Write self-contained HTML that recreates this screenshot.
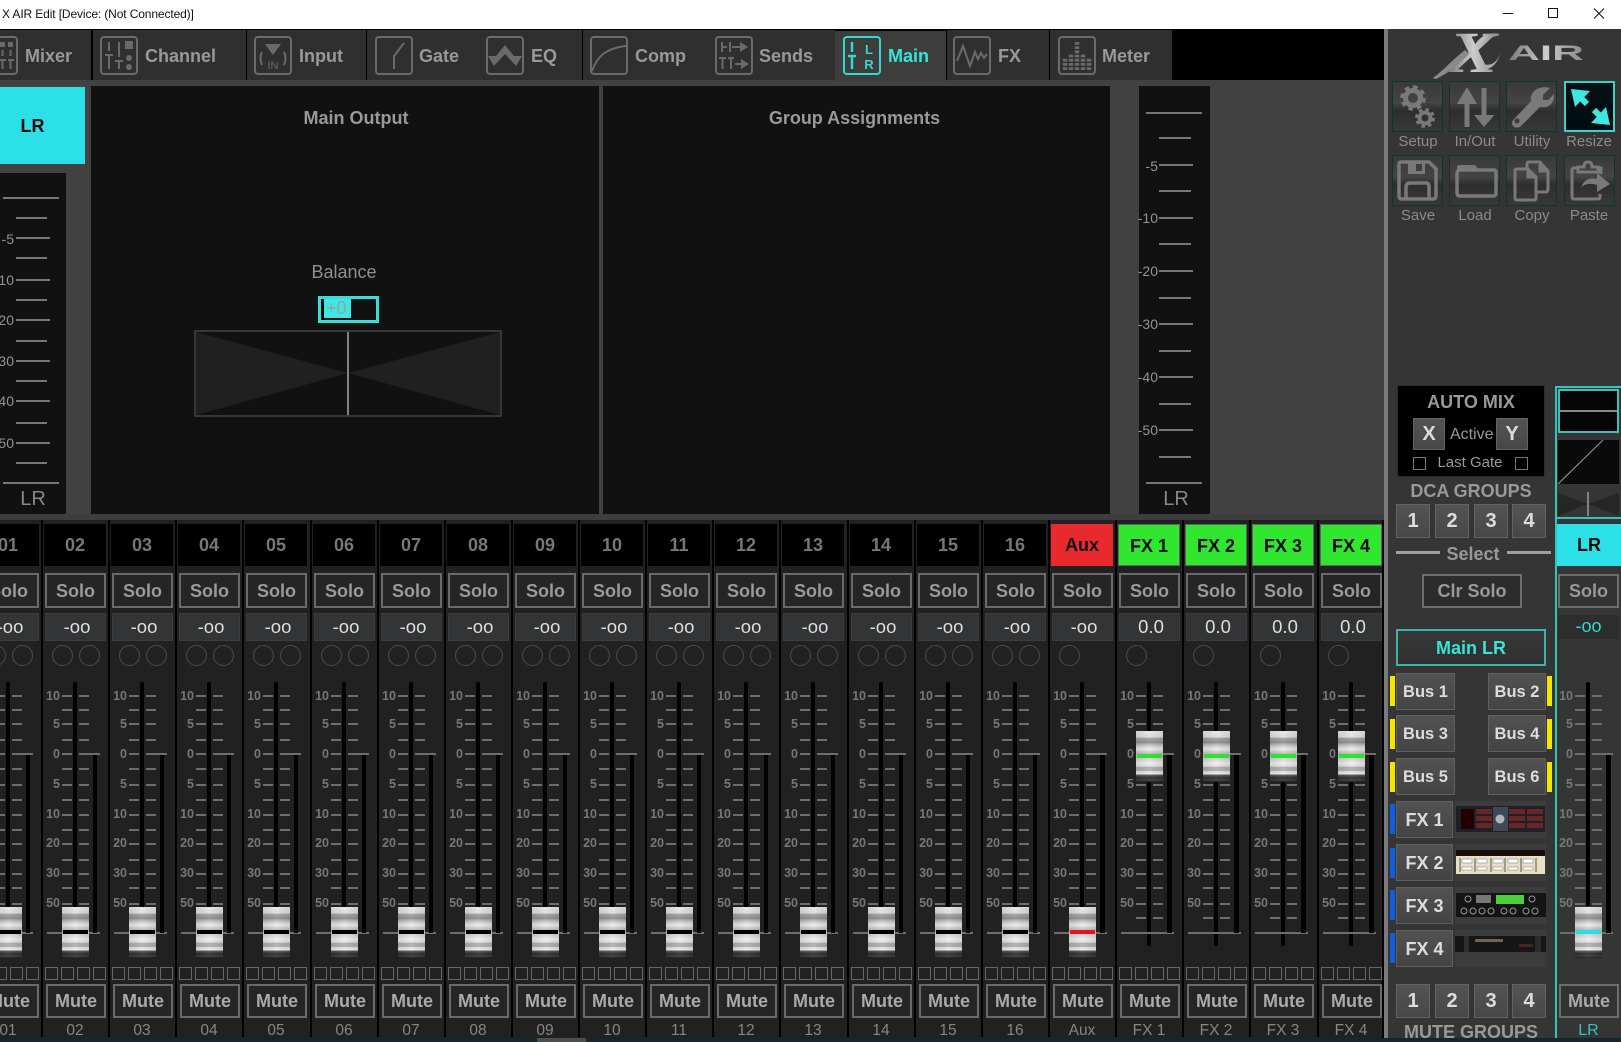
<!DOCTYPE html>
<html><head><meta charset="utf-8"><title>X AIR Edit</title>
<style>
*{box-sizing:border-box;margin:0;padding:0}
html,body{width:1621px;height:1042px;overflow:hidden;background:#414141;font-family:"Liberation Sans",sans-serif}
#root{position:relative;width:1621px;height:1042px;overflow:hidden;background:#414141}
.a,#root i,#root b,#root span,#root p,#root svg{position:absolute;display:block}
.tx{white-space:nowrap;text-align:center}
/* tabs */
#tabs{left:0;top:29px;width:1384px;height:51px;background:#000}
.tab{position:absolute;top:1px;height:50px;background:#2f2f2f}
.tl{position:absolute;top:16px;font:bold 18px/22px "Liberation Sans",sans-serif;color:#999;white-space:nowrap}
.ic{top:7px;width:38px;height:39px;fill:none;stroke:#6a6a6a;stroke-width:2}
.ic .fl{fill:#6a6a6a;stroke:none}
.pn{background:#111}
.ttl{font:bold 18px/22px "Liberation Sans",sans-serif;color:#999;text-align:center;white-space:nowrap}
.ln{background:#777;height:2px}
.ml{font:14px/16px "Liberation Sans",sans-serif;color:#939393;text-align:right;width:40px;white-space:nowrap}
/* channels */
#strip{left:0;top:520px;width:1384px;height:518px;background:#212121}
.c{position:absolute;top:0;width:62px;height:1042px}
.c::before{content:"";position:absolute;left:-3px;top:520px;width:2px;height:517px;background:#000}
.c.lr::before{display:none}
.c .h{left:0;top:524px;width:62px;height:42px;background:#000;color:#777;font:bold 18px/42px "Liberation Sans",sans-serif;text-align:center}
.c .h.g{background:#31e62e;color:#0a0a0a}
.c .h.r{background:#e8292e;color:#111}
.c .so{left:1px;top:573px;width:61px;height:35px;border:2px solid #6a6a6a;background:#252525;color:#9a9a9a;font:bold 18px/33px "Liberation Sans",sans-serif;text-align:center}
.c .v{left:1px;top:613px;width:61px;height:28px;background:#323436;border:1px solid #3a3c3e;color:#dedede;font:18.5px/26px "Liberation Sans",sans-serif;text-align:center;padding-left:3px}
.c .o{left:8px;top:645px;width:21px;height:21px;border:1px solid #4c4c4c;border-radius:50%}
.c .o2{left:35px}
.c .tr{left:29px;top:682px;width:4px;height:264px;background:#000;border-radius:2px 2px 0 0}
.c .tk{left:18px;top:695px;width:10px;height:2px;background:#6e6e6e;box-shadow:17px 0 #6e6e6e,0 14px #6e6e6e,17px 14px #6e6e6e,0 28px #6e6e6e,17px 28px #6e6e6e,0 44px #6e6e6e,17px 44px #6e6e6e,0 73px #6e6e6e,17px 73px #6e6e6e,0 89px #6e6e6e,17px 89px #6e6e6e,0 104px #6e6e6e,17px 104px #6e6e6e,0 119px #6e6e6e,17px 119px #6e6e6e,0 134px #6e6e6e,17px 134px #6e6e6e,0 148px #6e6e6e,17px 148px #6e6e6e,0 164px #6e6e6e,17px 164px #6e6e6e,0 178px #6e6e6e,17px 178px #6e6e6e,0 192px #6e6e6e,17px 192px #6e6e6e,0 208px #6e6e6e,17px 208px #6e6e6e,0 222px #6e6e6e,17px 222px #6e6e6e}
.c .l0{left:18px;top:753px;width:38px;height:2px;background:linear-gradient(90deg,#6e6e6e 0,#6e6e6e 10px,transparent 10px,transparent 17px,#6e6e6e 17px)}
.c .l1{left:3px;top:932px;width:53px;height:2px;background:#6e6e6e}
.c .mt{left:49px;top:755px;width:4px;height:178px;background:#000}
.c .mt.w{width:5px}
.c .n{left:0;top:0;width:16px;height:0}
.c .n a{position:absolute;right:0;font:bold 12.5px/14px "Liberation Sans",sans-serif;color:#777}
.c .n a:nth-child(1){top:689px}.c .n a:nth-child(2){top:717px}.c .n a:nth-child(3){top:747px}.c .n a:nth-child(4){top:777px}.c .n a:nth-child(5){top:807px}.c .n a:nth-child(6){top:836px}.c .n a:nth-child(7){top:866px}.c .n a:nth-child(8){top:896px}
.f{left:18px;top:907px;width:27px;height:51px;background:linear-gradient(90deg,rgba(0,0,0,.1),rgba(255,255,255,.05) 50%,rgba(0,0,0,.1)),linear-gradient(#e8e8e8 0,#dedede 6px,#8f8f8f 8px,#a6a6a6 9px,#8a8a8a 11px,#b0b0b0 13px,#cfcfcf 15px,#eee 18px,#bdbdbd 23px,#d6d6d6 28px,#f2f2f2 33px,#cfcfcf 36px,#909090 37px,#d0d0d0 38px,#8a8a8a 39px,#ddd 40px,#eee 43px,#5c5c5c 44px,#2a2a2a 47px,#444 49px,#1a1a1a 51px)}
.f::after{content:"";position:absolute;left:1px;right:1px;top:23px;height:4px;background:var(--k,#000)}
.c .q{left:1px;top:967px;width:61px;height:13px}
.c .q i{top:0;width:13px;height:13px;border:1.5px solid #666}
.c .q i:nth-child(1){left:0}.c .q i:nth-child(2){left:16px}.c .q i:nth-child(3){left:32px}.c .q i:nth-child(4){left:48px}
.c .mu{left:2px;top:984px;width:60px;height:34px;border:2px solid #6a6a6a;background:#252525;color:#aaa;font:bold 18px/30px "Liberation Sans",sans-serif;text-align:center}
.c .nm{left:0;top:1022px;width:62px;font:15.5px/18px "Liberation Sans",sans-serif;color:#868686;text-align:center}
/* right panel */
#rp{left:1388px;top:29px;width:233px;height:1009px;background:#353535}
.tb{width:51px;height:51px;background:linear-gradient(#393939 0,#444 42%,#2e2e2e 58%,#383838 100%);border:1px solid #0f3530}
.tb svg{left:0;top:0;width:49px;height:49px}
.tlb{width:60px;text-align:center;font:15px/18px "Liberation Sans",sans-serif;color:#8b8b8b;white-space:nowrap}
.g{width:34px;height:34px;background:linear-gradient(#545454,#474747);border:1px solid #626262;color:#ddd;font:bold 20px/32px "Liberation Sans",sans-serif;text-align:center}
.bb{height:37px;background:linear-gradient(#525252,#444);border:1px solid #606060;color:#ddd;font:bold 16.5px/37px "Liberation Sans",sans-serif;text-align:center}
.fx{font-size:18px;line-height:36px}
.flg{width:5px;height:30px}
.rk{left:1455px;width:91px;height:37px;background:#3c3c3c}
</style></head><body><div id="root">

<!-- title bar -->
<div class="a" style="left:0;top:0;width:1621px;height:29px;background:#fff"></div>
<div class="a tx" style="left:2px;top:6px;font:12px/16px 'Liberation Sans',sans-serif;color:#111;letter-spacing:-.12px;text-align:left">X AIR Edit [Device: (Not Connected)]</div>
<svg style="left:1500px;top:6px" width="110" height="16" fill="none" stroke="#111" stroke-width="1"><path d="M3 7.500H13"/><rect x="48.500" y="2.500" width="9" height="9"/><path d="M94 2.500L104 12.500M104 2.500L94 12.500"/></svg>

<!-- tabs -->
<div id="tabs" class="a">
<div class="tab" style="left:0;width:91px"></div>
<div class="tab" style="left:93px;width:153px"></div>
<div class="tab" style="left:247px;width:119px"></div>
<div class="tab" style="left:367px;width:215px"></div>
<div class="tab" style="left:583px;width:252px"></div>
<div class="tab" style="left:835px;width:111px;background:#3d3d3d;top:2px"></div>
<div class="tab" style="left:947px;width:102px"></div>
<div class="tab" style="left:1050px;width:122px"></div>

<svg class="ic" style="left:-20px" viewBox="0 0 38 39"><rect x="1" y="1" width="36" height="37" rx="3"/><path class="fl" d="M20 6h5v5h-5zM28 6h5v5h-5z"/><path d="M22.500 14v6M30.500 14v6M19 24h7M22.500 24v9M28 24h6M30.500 24v9"/></svg>
<div class="tl" style="left:25px">Mixer</div>
<svg class="ic" style="left:100px" viewBox="0 0 38 39"><rect x="1" y="1" width="36" height="37" rx="3"/><path d="M9 6v9M5 19h8M9 19v14M19 6v15M15 25h8M19 25v8"/><path class="fl" d="M25 5h8v8h-8z"/><circle class="fl" cx="29" cy="22" r="3"/><circle class="fl" cx="29" cy="31" r="3"/></svg>
<div class="tl" style="left:145px">Channel</div>
<svg class="ic" style="left:254px" viewBox="0 0 38 39"><rect x="1" y="1" width="36" height="37" rx="3"/><path class="fl" d="M11 8h16l-8 11z"/><path d="M8 16q-3 6 0 13M30 16q3 6 0 13"/><text x="19" y="33" text-anchor="middle" font-family="Liberation Sans" font-size="11" fill="#6a6a6a" stroke="none">IN</text></svg>
<div class="tl" style="left:299px">Input</div>
<svg class="ic" style="left:375px" viewBox="0 0 38 39"><rect x="1" y="1" width="36" height="37" rx="3"/><path d="M19 33V20L29 7"/></svg>
<div class="tl" style="left:419px">Gate</div>
<svg class="ic" style="left:486px" viewBox="0 0 38 39"><rect x="1" y="1" width="36" height="37" rx="3"/><path class="fl" d="M2 20h8L19 9l9 11h8l-6 10-11-12-11 12z"/></svg>
<div class="tl" style="left:531px">EQ</div>
<svg class="ic" style="left:590px" viewBox="0 0 38 39"><rect x="1" y="1" width="36" height="37" rx="3"/><path d="M2 35C7 20 17 12 36 10"/></svg>
<div class="tl" style="left:635px">Comp</div>
<svg class="ic" style="left:715px" viewBox="0 0 38 39"><rect x="1" y="1" width="36" height="37" rx="3"/><path d="M7 6v10M7 11h5M15 6v10M17 11h9M4 22h7M7.500 22v11M13 22h6M16 22v11M20 28h7"/><path class="fl" d="M25 6l8 5-8 5zM26 23l8 5-8 5z"/></svg>
<div class="tl" style="left:759px">Sends</div>
<svg class="ic" style="left:843px;stroke:#35d8d0" viewBox="0 0 38 39"><rect x="1" y="1" width="36" height="37" rx="3"/><path d="M9 6v10M5 20h8M9 20v13" stroke-width="2.500"/><text x="26" y="18" text-anchor="middle" font-family="Liberation Sans" font-weight="bold" font-size="13" fill="#35d8d0" stroke="none">L</text><text x="26" y="33" text-anchor="middle" font-family="Liberation Sans" font-weight="bold" font-size="13" fill="#35d8d0" stroke="none">R</text></svg>
<div class="tl" style="left:888px;color:#38e4d8">Main</div>
<svg class="ic" style="left:953px" viewBox="0 0 38 39"><rect x="1" y="1" width="36" height="37" rx="3"/><path d="M4 25L10 10l7 20 5-14 3 7 3-6 3 5 3-4"/></svg>
<div class="tl" style="left:998px">FX</div>
<svg class="ic" style="left:1058px" viewBox="0 0 38 39"><rect x="1" y="1" width="36" height="37" rx="3"/><path d="M7 34V22M13 34V18M19 34V5M25 34V18M31 34V22" stroke-width="4.500" stroke-dasharray="2.800 1.400"/></svg>
<div class="tl" style="left:1102px">Meter</div>
</div>

<!-- main panels -->
<div class="a" style="left:0;top:87px;width:85px;height:77px;background:#2ce0e8"></div>
<div class="a tx" style="left:0;top:115px;width:65px;font:bold 18px/22px 'Liberation Sans',sans-serif;color:#0a0a0a">LR</div>
<div class="a pn" style="left:0;top:173px;width:66px;height:341px"></div>
<div class="a pn" style="left:91px;top:86px;width:508px;height:428px"></div>
<div class="a pn" style="left:603px;top:86px;width:507px;height:428px"></div>
<div class="a pn" style="left:1139px;top:86px;width:71px;height:428px"></div>
<div class="a ttl" style="left:91px;top:107px;width:530px">Main Output</div>
<div class="a ttl" style="left:603px;top:107px;width:503px">Group Assignments</div>

<!-- left meter -->
<div class="a ln" style="left:3px;top:197px;width:56px"></div><div class="a ln" style="left:3px;top:482px;width:56px"></div>
<div class="a ln" style="left:16px;top:217px;width:31px"></div><div class="a ln" style="left:16px;top:257px;width:31px"></div><div class="a ln" style="left:16px;top:299px;width:31px"></div><div class="a ln" style="left:16px;top:340px;width:31px"></div><div class="a ln" style="left:16px;top:380px;width:31px"></div><div class="a ln" style="left:16px;top:422px;width:31px"></div><div class="a ln" style="left:16px;top:462px;width:31px"></div>
<div class="a ln" style="left:16px;top:237px;width:34px"></div><div class="a ln" style="left:16px;top:279px;width:34px"></div><div class="a ln" style="left:16px;top:319px;width:34px"></div><div class="a ln" style="left:16px;top:360px;width:34px"></div><div class="a ln" style="left:16px;top:400px;width:34px"></div><div class="a ln" style="left:16px;top:442px;width:34px"></div>
<div class="a ml" style="left:-26px;top:231px">-5</div><div class="a ml" style="left:-26px;top:272px">-10</div><div class="a ml" style="left:-26px;top:312px">-20</div><div class="a ml" style="left:-26px;top:353px">-30</div><div class="a ml" style="left:-26px;top:393px">-40</div><div class="a ml" style="left:-26px;top:435px">-50</div>
<div class="a tx" style="left:8px;top:488px;width:50px;font:20px/22px 'Liberation Sans',sans-serif;color:#888">LR</div>

<!-- right meter -->
<div class="a ln" style="left:1146px;top:112px;width:56px"></div><div class="a ln" style="left:1146px;top:482px;width:56px"></div>
<div class="a ln" style="left:1159px;top:137px;width:32px"></div><div class="a ln" style="left:1159px;top:190px;width:32px"></div><div class="a ln" style="left:1159px;top:243px;width:32px"></div><div class="a ln" style="left:1159px;top:297px;width:32px"></div><div class="a ln" style="left:1159px;top:350px;width:32px"></div><div class="a ln" style="left:1159px;top:403px;width:32px"></div><div class="a ln" style="left:1159px;top:456px;width:32px"></div>
<div class="a ln" style="left:1159px;top:164px;width:34px"></div><div class="a ln" style="left:1159px;top:217px;width:34px"></div><div class="a ln" style="left:1159px;top:270px;width:34px"></div><div class="a ln" style="left:1159px;top:323px;width:34px"></div><div class="a ln" style="left:1159px;top:376px;width:34px"></div><div class="a ln" style="left:1159px;top:429px;width:34px"></div>
<div class="a ml" style="left:1118px;top:158px">-5</div><div class="a ml" style="left:1118px;top:210px">-10</div><div class="a ml" style="left:1118px;top:263px">-20</div><div class="a ml" style="left:1118px;top:316px">-30</div><div class="a ml" style="left:1118px;top:369px">-40</div><div class="a ml" style="left:1118px;top:422px">-50</div>
<div class="a tx" style="left:1151px;top:488px;width:50px;font:20px/22px 'Liberation Sans',sans-serif;color:#888">LR</div>

<!-- balance -->
<div class="a tx" style="left:294px;top:261px;width:100px;font:18px/22px 'Liberation Sans',sans-serif;color:#909090">Balance</div>
<div class="a" style="left:318px;top:296px;width:61px;height:27px;background:#111;border:3px solid #3cdcd6"></div>
<div class="a" style="left:321px;top:299px;width:3px;height:21px;background:#000"></div>
<div class="a" style="left:324px;top:299px;width:27px;height:19px;background:#40e6e2"></div>
<div class="a tx" style="left:326px;top:298px;font:18px/20px 'Liberation Sans',sans-serif;color:#8aa8a8">+0</div>
<svg style="left:194px;top:330px" width="308" height="87"><path d="M2 2L154 43L2 85zM306 2L154 43L306 85z" fill="#202020"/><rect x="1" y="1" width="306" height="85" fill="none" stroke="#424242" stroke-width="1.500"/><path d="M154 2V85" stroke="#a8a8a8" stroke-width="1.500"/></svg>

<!-- channel strip -->
<div id="strip" class="a"></div>
<div class="a" style="left:0;top:514px;width:1384px;height:6px;background:#3d3d3d"></div>

<div class="c" style="left:-23px"><b class="h">01</b><b class="so">Solo</b><span class="v">-oo</span><i class="o"></i><i class="o o2"></i><i class="tr"></i><i class="tk"></i><i class="l0"></i><i class="l1"></i><i class="mt"></i><p class="n"><a>10</a><a>5</a><a>0</a><a>5</a><a>10</a><a>20</a><a>30</a><a>50</a></p><i class="f"></i><p class="q"><i></i><i></i><i></i><i></i></p><b class="mu">Mute</b><span class="nm">01</span></div>
<div class="c" style="left:44px"><b class="h">02</b><b class="so">Solo</b><span class="v">-oo</span><i class="o"></i><i class="o o2"></i><i class="tr"></i><i class="tk"></i><i class="l0"></i><i class="l1"></i><i class="mt"></i><p class="n"><a>10</a><a>5</a><a>0</a><a>5</a><a>10</a><a>20</a><a>30</a><a>50</a></p><i class="f"></i><p class="q"><i></i><i></i><i></i><i></i></p><b class="mu">Mute</b><span class="nm">02</span></div>
<div class="c" style="left:111px"><b class="h">03</b><b class="so">Solo</b><span class="v">-oo</span><i class="o"></i><i class="o o2"></i><i class="tr"></i><i class="tk"></i><i class="l0"></i><i class="l1"></i><i class="mt"></i><p class="n"><a>10</a><a>5</a><a>0</a><a>5</a><a>10</a><a>20</a><a>30</a><a>50</a></p><i class="f"></i><p class="q"><i></i><i></i><i></i><i></i></p><b class="mu">Mute</b><span class="nm">03</span></div>
<div class="c" style="left:178px"><b class="h">04</b><b class="so">Solo</b><span class="v">-oo</span><i class="o"></i><i class="o o2"></i><i class="tr"></i><i class="tk"></i><i class="l0"></i><i class="l1"></i><i class="mt"></i><p class="n"><a>10</a><a>5</a><a>0</a><a>5</a><a>10</a><a>20</a><a>30</a><a>50</a></p><i class="f"></i><p class="q"><i></i><i></i><i></i><i></i></p><b class="mu">Mute</b><span class="nm">04</span></div>
<div class="c" style="left:245px"><b class="h">05</b><b class="so">Solo</b><span class="v">-oo</span><i class="o"></i><i class="o o2"></i><i class="tr"></i><i class="tk"></i><i class="l0"></i><i class="l1"></i><i class="mt"></i><p class="n"><a>10</a><a>5</a><a>0</a><a>5</a><a>10</a><a>20</a><a>30</a><a>50</a></p><i class="f"></i><p class="q"><i></i><i></i><i></i><i></i></p><b class="mu">Mute</b><span class="nm">05</span></div>
<div class="c" style="left:313px"><b class="h">06</b><b class="so">Solo</b><span class="v">-oo</span><i class="o"></i><i class="o o2"></i><i class="tr"></i><i class="tk"></i><i class="l0"></i><i class="l1"></i><i class="mt"></i><p class="n"><a>10</a><a>5</a><a>0</a><a>5</a><a>10</a><a>20</a><a>30</a><a>50</a></p><i class="f"></i><p class="q"><i></i><i></i><i></i><i></i></p><b class="mu">Mute</b><span class="nm">06</span></div>
<div class="c" style="left:380px"><b class="h">07</b><b class="so">Solo</b><span class="v">-oo</span><i class="o"></i><i class="o o2"></i><i class="tr"></i><i class="tk"></i><i class="l0"></i><i class="l1"></i><i class="mt"></i><p class="n"><a>10</a><a>5</a><a>0</a><a>5</a><a>10</a><a>20</a><a>30</a><a>50</a></p><i class="f"></i><p class="q"><i></i><i></i><i></i><i></i></p><b class="mu">Mute</b><span class="nm">07</span></div>
<div class="c" style="left:447px"><b class="h">08</b><b class="so">Solo</b><span class="v">-oo</span><i class="o"></i><i class="o o2"></i><i class="tr"></i><i class="tk"></i><i class="l0"></i><i class="l1"></i><i class="mt"></i><p class="n"><a>10</a><a>5</a><a>0</a><a>5</a><a>10</a><a>20</a><a>30</a><a>50</a></p><i class="f"></i><p class="q"><i></i><i></i><i></i><i></i></p><b class="mu">Mute</b><span class="nm">08</span></div>
<div class="c" style="left:514px"><b class="h">09</b><b class="so">Solo</b><span class="v">-oo</span><i class="o"></i><i class="o o2"></i><i class="tr"></i><i class="tk"></i><i class="l0"></i><i class="l1"></i><i class="mt"></i><p class="n"><a>10</a><a>5</a><a>0</a><a>5</a><a>10</a><a>20</a><a>30</a><a>50</a></p><i class="f"></i><p class="q"><i></i><i></i><i></i><i></i></p><b class="mu">Mute</b><span class="nm">09</span></div>
<div class="c" style="left:581px"><b class="h">10</b><b class="so">Solo</b><span class="v">-oo</span><i class="o"></i><i class="o o2"></i><i class="tr"></i><i class="tk"></i><i class="l0"></i><i class="l1"></i><i class="mt"></i><p class="n"><a>10</a><a>5</a><a>0</a><a>5</a><a>10</a><a>20</a><a>30</a><a>50</a></p><i class="f"></i><p class="q"><i></i><i></i><i></i><i></i></p><b class="mu">Mute</b><span class="nm">10</span></div>
<div class="c" style="left:648px"><b class="h">11</b><b class="so">Solo</b><span class="v">-oo</span><i class="o"></i><i class="o o2"></i><i class="tr"></i><i class="tk"></i><i class="l0"></i><i class="l1"></i><i class="mt"></i><p class="n"><a>10</a><a>5</a><a>0</a><a>5</a><a>10</a><a>20</a><a>30</a><a>50</a></p><i class="f"></i><p class="q"><i></i><i></i><i></i><i></i></p><b class="mu">Mute</b><span class="nm">11</span></div>
<div class="c" style="left:715px"><b class="h">12</b><b class="so">Solo</b><span class="v">-oo</span><i class="o"></i><i class="o o2"></i><i class="tr"></i><i class="tk"></i><i class="l0"></i><i class="l1"></i><i class="mt"></i><p class="n"><a>10</a><a>5</a><a>0</a><a>5</a><a>10</a><a>20</a><a>30</a><a>50</a></p><i class="f"></i><p class="q"><i></i><i></i><i></i><i></i></p><b class="mu">Mute</b><span class="nm">12</span></div>
<div class="c" style="left:782px"><b class="h">13</b><b class="so">Solo</b><span class="v">-oo</span><i class="o"></i><i class="o o2"></i><i class="tr"></i><i class="tk"></i><i class="l0"></i><i class="l1"></i><i class="mt"></i><p class="n"><a>10</a><a>5</a><a>0</a><a>5</a><a>10</a><a>20</a><a>30</a><a>50</a></p><i class="f"></i><p class="q"><i></i><i></i><i></i><i></i></p><b class="mu">Mute</b><span class="nm">13</span></div>
<div class="c" style="left:850px"><b class="h">14</b><b class="so">Solo</b><span class="v">-oo</span><i class="o"></i><i class="o o2"></i><i class="tr"></i><i class="tk"></i><i class="l0"></i><i class="l1"></i><i class="mt"></i><p class="n"><a>10</a><a>5</a><a>0</a><a>5</a><a>10</a><a>20</a><a>30</a><a>50</a></p><i class="f"></i><p class="q"><i></i><i></i><i></i><i></i></p><b class="mu">Mute</b><span class="nm">14</span></div>
<div class="c" style="left:917px"><b class="h">15</b><b class="so">Solo</b><span class="v">-oo</span><i class="o"></i><i class="o o2"></i><i class="tr"></i><i class="tk"></i><i class="l0"></i><i class="l1"></i><i class="mt"></i><p class="n"><a>10</a><a>5</a><a>0</a><a>5</a><a>10</a><a>20</a><a>30</a><a>50</a></p><i class="f"></i><p class="q"><i></i><i></i><i></i><i></i></p><b class="mu">Mute</b><span class="nm">15</span></div>
<div class="c" style="left:984px"><b class="h">16</b><b class="so">Solo</b><span class="v">-oo</span><i class="o"></i><i class="o o2"></i><i class="tr"></i><i class="tk"></i><i class="l0"></i><i class="l1"></i><i class="mt"></i><p class="n"><a>10</a><a>5</a><a>0</a><a>5</a><a>10</a><a>20</a><a>30</a><a>50</a></p><i class="f"></i><p class="q"><i></i><i></i><i></i><i></i></p><b class="mu">Mute</b><span class="nm">16</span></div>
<div class="c" style="left:1051px"><b class="h r">Aux</b><b class="so">Solo</b><span class="v">-oo</span><i class="o"></i><i class="tr"></i><i class="tk"></i><i class="l0"></i><i class="l1"></i><i class="mt w"></i><p class="n"><a>10</a><a>5</a><a>0</a><a>5</a><a>10</a><a>20</a><a>30</a><a>50</a></p><i class="f" style="--k:#e8101c"></i><p class="q"><i></i><i></i><i></i><i></i></p><b class="mu">Mute</b><span class="nm">Aux</span></div>
<div class="c" style="left:1118px"><b class="h g">FX 1</b><b class="so">Solo</b><span class="v">0.0</span><i class="o"></i><i class="tr"></i><i class="tk"></i><i class="l0"></i><i class="l1"></i><i class="mt w"></i><p class="n"><a>10</a><a>5</a><a>0</a><a>5</a><a>10</a><a>20</a><a>30</a><a>50</a></p><i class="f" style="top:731px;--k:#2fe02f"></i><p class="q"><i></i><i></i><i></i><i></i></p><b class="mu">Mute</b><span class="nm">FX 1</span></div>
<div class="c" style="left:1185px"><b class="h g">FX 2</b><b class="so">Solo</b><span class="v">0.0</span><i class="o"></i><i class="tr"></i><i class="tk"></i><i class="l0"></i><i class="l1"></i><i class="mt w"></i><p class="n"><a>10</a><a>5</a><a>0</a><a>5</a><a>10</a><a>20</a><a>30</a><a>50</a></p><i class="f" style="top:731px;--k:#2fe02f"></i><p class="q"><i></i><i></i><i></i><i></i></p><b class="mu">Mute</b><span class="nm">FX 2</span></div>
<div class="c" style="left:1252px"><b class="h g">FX 3</b><b class="so">Solo</b><span class="v">0.0</span><i class="o"></i><i class="tr"></i><i class="tk"></i><i class="l0"></i><i class="l1"></i><i class="mt w"></i><p class="n"><a>10</a><a>5</a><a>0</a><a>5</a><a>10</a><a>20</a><a>30</a><a>50</a></p><i class="f" style="top:731px;--k:#2fe02f"></i><p class="q"><i></i><i></i><i></i><i></i></p><b class="mu">Mute</b><span class="nm">FX 3</span></div>
<div class="c" style="left:1320px"><b class="h g">FX 4</b><b class="so">Solo</b><span class="v">0.0</span><i class="o"></i><i class="tr"></i><i class="tk"></i><i class="l0"></i><i class="l1"></i><i class="mt w"></i><p class="n"><a>10</a><a>5</a><a>0</a><a>5</a><a>10</a><a>20</a><a>30</a><a>50</a></p><i class="f" style="top:731px;--k:#2fe02f"></i><p class="q"><i></i><i></i><i></i><i></i></p><b class="mu">Mute</b><span class="nm">FX 4</span></div>

<!-- right panel -->
<div class="a" style="left:1382px;top:520px;width:2px;height:518px;background:#000"></div>
<div class="a" style="left:1384px;top:29px;width:4px;height:1009px;background:#7a7a7a"></div>
<div id="rp" class="a"></div>

<svg style="left:1430px;top:30px" width="160" height="52">
<defs><linearGradient id="lg" x1="0" y1="0" x2="1" y2="0"><stop offset="0" stop-color="#777"/><stop offset=".5" stop-color="#ccc"/><stop offset="1" stop-color="#888"/></linearGradient></defs>
<path d="M3 48C14 40 22 30 35 20L41 25C28 36 16 44 6 49Z" fill="#8a8a8a"/>
<path d="M70 4C58 2 50 6 44 16L38 24 43 29 50 18C55 11 61 7 70 4Z" fill="#bdbdbd"/>
<path d="M70 24C66 34 60 36 53 34L49 25 44 30 48 38C56 42 66 38 70 24Z" fill="#aaa"/>
<text transform="translate(19 42) scale(1.25 1)" font-family="Liberation Serif" font-style="italic" font-weight="bold" font-size="58" fill="url(#lg)">X</text>
<text x="78" y="30" font-family="Liberation Sans" font-weight="bold" font-size="21" fill="url(#lg)" textLength="76" lengthAdjust="spacingAndGlyphs">AIR</text>
</svg>

<div class="a tb" style="left:1392px;top:81px"><svg viewBox="0 0 49 49" fill="none" stroke="#77797b"><circle cx="20" cy="16" r="7.500" stroke-width="5"/><circle cx="20" cy="16" r="11" stroke-width="3.500" stroke-dasharray="4.500 4.100"/><circle cx="32" cy="36" r="5.500" stroke-width="4"/><circle cx="32" cy="36" r="8.500" stroke-width="3" stroke-dasharray="3.500 3.200"/></svg></div>
<div class="a tb" style="left:1449px;top:81px"><svg viewBox="0 0 49 49" fill="#77797b"><path d="M17 5L27 22H19.500V45H14.500V22H7z"/><path d="M31.500 6H36.500V33H44.500L34 45 24 33H31.500z"/></svg></div>
<div class="a tb" style="left:1506px;top:81px"><svg viewBox="0 0 49 49"><path d="M43 6l-7 7v5h5l6-6c1 8-5 15-14 13L14 44c-3 3-9 2-9-3 0-2 1-3 3-5L24 19C22 10 32 3 43 6z" fill="#77797b"/><circle cx="10" cy="39" r="2.500" fill="#3a3a3a"/></svg></div>
<div class="a tb" style="left:1564px;top:81px;background:linear-gradient(#051015,#000e10);border:2px solid #3fd0c8"><svg style="left:-1px;top:-1px" viewBox="0 0 49 49"><g fill="#3ee8e0"><path d="M6 7L25 9 10 25z"/><path d="M45 43L26 41 41 25z"/></g><path d="M14 14L22 22M29 28L37 36" stroke="#3ee8e0" stroke-width="6"/></svg></div>
<div class="a tlb" style="left:1388px;top:133px">Setup</div><div class="a tlb" style="left:1445px;top:133px">In/Out</div><div class="a tlb" style="left:1502px;top:133px">Utility</div><div class="a tlb" style="left:1559px;top:133px">Resize</div>

<div class="a tb" style="left:1392px;top:155px"><svg viewBox="0 0 49 49" fill="none" stroke="#77797b" stroke-width="3.500"><path d="M8 6H36L43 13V40Q43 43 40 43H9Q6 43 6 40V8Q6 6 8 6Z"/><path d="M15 6H32V18H15Z" fill="#77797b" stroke="none"/><path d="M13 42V31Q13 27 17 27H33Q36 27 36 31V42"/><path d="M23 8H29V15H23Z" fill="#3f3f3f" stroke="none"/></svg></div>
<div class="a tb" style="left:1449px;top:155px"><svg viewBox="0 0 49 49" fill="none" stroke="#77797b" stroke-width="3.500"><path d="M7 18Q7 14 10 14H44Q46 14 46 17V37Q46 40 43 40H10Q7 40 7 37Z"/><path d="M7 14V11Q7 9 10 9H25L29 14Z" fill="#77797b" stroke="none"/></svg></div>
<div class="a tb" style="left:1506px;top:155px"><svg viewBox="0 0 49 49" fill="none" stroke="#77797b" stroke-width="3"><path d="M20 13V8Q20 6 22 6H33L41 15V33Q41 36 38 36H30"/><path d="M33 6V15H41" fill="#77797b"/><path d="M10 13H21L29 21V42Q29 44 27 44H10Q8 44 8 42V15Q8 13 10 13Z"/><path d="M21 13V21H29" fill="#77797b"/></svg></div>
<div class="a tb" style="left:1564px;top:155px"><svg viewBox="0 0 49 49" fill="none" stroke="#77797b" stroke-width="3"><path d="M13 12H9Q7 12 7 14V41Q7 43 9 43H33Q35 43 35 41V38M33 12H36V18"/><path d="M13 16V11H19Q19 6 23 6T27 11H33V16Z" fill="#3f3f3f"/><path d="M16 31Q21 20 32 23V17L45 28 32 36V29Q23 26 16 31Z" fill="#77797b" stroke="none"/></svg></div>
<div class="a tlb" style="left:1388px;top:207px">Save</div><div class="a tlb" style="left:1445px;top:207px">Load</div><div class="a tlb" style="left:1502px;top:207px">Copy</div><div class="a tlb" style="left:1559px;top:207px">Paste</div>

<!-- automix -->
<div class="a" style="left:1397px;top:385px;width:148px;height:92px;background:#000;border:1px solid #2c2c2c"></div>
<div class="a ttl" style="left:1398px;top:391px;width:146px">AUTO MIX</div>
<div class="a g" style="left:1413px;top:418px;width:32px;height:32px;line-height:30px">X</div>
<div class="a tx" style="left:1450px;top:426px;width:41px;font:16px/18px 'Liberation Sans',sans-serif;color:#999">Active</div>
<div class="a g" style="left:1496px;top:418px;width:32px;height:32px;line-height:30px">Y</div>
<div class="a" style="left:1413px;top:457px;width:13px;height:13px;border:1.5px solid #777"></div>
<div class="a tx" style="left:1437px;top:454px;width:66px;font:15px/18px 'Liberation Sans',sans-serif;color:#999">Last Gate</div>
<div class="a" style="left:1515px;top:457px;width:13px;height:13px;border:1.5px solid #777"></div>

<div class="a ttl" style="left:1396px;top:480px;width:150px">DCA GROUPS</div>
<div class="a g" style="left:1396px;top:504px">1</div><div class="a g" style="left:1435px;top:504px">2</div><div class="a g" style="left:1474px;top:504px">3</div><div class="a g" style="left:1512px;top:504px">4</div>
<div class="a" style="left:1396px;top:551px;width:44px;height:3px;background:#a0a0a0"></div>
<div class="a" style="left:1507px;top:551px;width:44px;height:3px;background:#a0a0a0"></div>
<div class="a ttl" style="left:1440px;top:543px;width:66px">Select</div>
<div class="a" style="left:1422px;top:574px;width:100px;height:34px;border:2px solid #6e6e6e;background:#2c2c2c;color:#999;font:bold 18px/31px 'Liberation Sans',sans-serif;text-align:center">Clr Solo</div>
<div class="a" style="left:1396px;top:629px;width:150px;height:37px;border:2px solid #3cb4ae;background:linear-gradient(#373737,#303030);color:#38e4d8;font:bold 18px/35px 'Liberation Sans',sans-serif;text-align:center">Main LR</div>

<div class="a flg" style="left:1390px;top:676px;background:#f2e600"></div><div class="a bb" style="left:1396px;top:673px;width:59px">Bus 1</div><div class="a bb" style="left:1488px;top:673px;width:58px">Bus 2</div><div class="a flg" style="left:1547px;top:676px;background:#f2e600"></div>
<div class="a flg" style="left:1390px;top:719px;background:#f2e600"></div><div class="a bb" style="left:1396px;top:715px;width:59px">Bus 3</div><div class="a bb" style="left:1488px;top:715px;width:58px">Bus 4</div><div class="a flg" style="left:1547px;top:719px;background:#f2e600"></div>
<div class="a flg" style="left:1390px;top:762px;background:#f2e600"></div><div class="a bb" style="left:1396px;top:758px;width:59px">Bus 5</div><div class="a bb" style="left:1488px;top:758px;width:58px">Bus 6</div><div class="a flg" style="left:1547px;top:762px;background:#f2e600"></div>

<div class="a flg" style="left:1390px;top:804px;background:#0e5fe0"></div><div class="a bb fx" style="left:1396px;top:801px;width:57px">FX 1</div>
<div class="a flg" style="left:1390px;top:848px;background:#0e5fe0"></div><div class="a bb fx" style="left:1396px;top:844px;width:57px">FX 2</div>
<div class="a flg" style="left:1390px;top:890px;background:#0e5fe0"></div><div class="a bb fx" style="left:1396px;top:887px;width:57px">FX 3</div>
<div class="a flg" style="left:1390px;top:933px;background:#0e5fe0"></div><div class="a bb fx" style="left:1396px;top:930px;width:57px">FX 4</div>

<svg class="rk" style="top:801px" width="91" height="37" viewBox="0 0 91 37"><rect x="1" y="5" width="89" height="26" fill="#1d2126"/><rect x="6" y="8" width="13" height="20" fill="#200"/><g fill="#6a2626"><rect x="21" y="8" width="16" height="5"/><rect x="21" y="15" width="16" height="5"/><rect x="21" y="22" width="16" height="5"/><rect x="54" y="8" width="16" height="5"/><rect x="54" y="15" width="16" height="5"/><rect x="54" y="22" width="16" height="5"/><rect x="72" y="8" width="16" height="5"/><rect x="72" y="15" width="16" height="5"/><rect x="72" y="22" width="16" height="5"/></g><rect x="38" y="6" width="15" height="24" fill="#3e4a58"/><circle cx="45" cy="18" r="4.500" fill="#b5b5b5"/></svg>
<svg class="rk" style="top:844px" width="91" height="37" viewBox="0 0 91 37"><rect x="1" y="6" width="89" height="24" fill="#e8e0c4"/><rect x="1" y="6" width="89" height="6" fill="#1a0c08"/><g stroke="#5a5648" stroke-width="1"><path d="M5 14V28M20 14V28M36 14V28M50 14V28M66 14V28M81 14V28"/></g><g fill="#fff" stroke="#777" stroke-width=".5"><rect x="7" y="15" width="10" height="4"/><rect x="7" y="23" width="10" height="3"/><rect x="22" y="15" width="10" height="4"/><rect x="22" y="23" width="10" height="3"/><rect x="38" y="15" width="10" height="4"/><rect x="38" y="23" width="10" height="3"/><rect x="53" y="15" width="10" height="4"/><rect x="53" y="23" width="10" height="3"/><rect x="68" y="15" width="10" height="4"/><rect x="68" y="23" width="10" height="3"/></g></svg>
<svg class="rk" style="top:887px" width="91" height="37" viewBox="0 0 91 37"><rect x="1" y="6" width="90" height="24" fill="#141414"/><rect x="41" y="8" width="28" height="9" fill="#4ccf3a"/><g fill="#777"><rect x="21" y="8" width="15" height="8"/></g><g fill="none" stroke="#999" stroke-width="1"><circle cx="13" cy="12" r="3"/><circle cx="77" cy="12" r="3"/><circle cx="9" cy="24" r="3"/><circle cx="18" cy="24" r="3"/><circle cx="27" cy="24" r="3"/><circle cx="36" cy="24" r="3"/><circle cx="49" cy="24" r="3"/><circle cx="58" cy="24" r="3"/><circle cx="71" cy="24" r="3"/><circle cx="80" cy="24" r="3"/></g></svg>
<svg class="rk" style="top:930px" width="91" height="37" viewBox="0 0 91 37"><rect x="0" y="6" width="91" height="16" fill="#161616"/><rect x="9" y="6" width="5" height="16" fill="#2e2e2e"/><rect x="20" y="9" width="28" height="3" fill="#6e6552"/><rect x="64" y="14" width="14" height="3" fill="#4d2518"/><rect x="80" y="6" width="6" height="16" fill="#2b2b2b"/></svg>

<div class="a g" style="left:1396px;top:984px">1</div><div class="a g" style="left:1435px;top:984px">2</div><div class="a g" style="left:1474px;top:984px">3</div><div class="a g" style="left:1512px;top:984px">4</div>
<div class="a" style="left:1396px;top:1018px;width:150px;height:20px;overflow:hidden"><div class="ttl" style="position:absolute;left:0;top:3px;width:150px">MUTE GROUPS</div></div>

<!-- LR strip -->
<div class="a" style="left:1555px;top:386px;width:66px;height:652px;border-left:2px solid #35c4bc;border-top:2px solid #35c4bc"></div>
<div class="a" style="left:1557px;top:517px;width:64px;height:2px;background:#35c4bc"></div>
<div class="a" style="left:1558px;top:389px;width:61px;height:44px;background:#050505;border:2px solid #35c4bc"></div>
<div class="a" style="left:1560px;top:410px;width:57px;height:2px;background:#8a8a8a"></div>
<svg style="left:1558px;top:440px" width="61" height="44"><rect width="61" height="44" fill="#0a0a0a"/><path d="M0 44L45 0" stroke="#8a8a8a" stroke-width="1.200"/></svg>
<svg style="left:1558px;top:491px" width="61" height="26"><path d="M0 2L30 13 0 25zM61 2L30 13 61 25z" fill="#262626"/><path d="M30 1V25" stroke="#aaa" stroke-width="1.300"/></svg>
<div class="a" style="left:1557px;top:524px;width:64px;height:42px;background:#2ce0e8;color:#0a0a0a;font:bold 18px/42px 'Liberation Sans',sans-serif;text-align:center">LR</div>
<div class="a" style="left:1558px;top:574px;width:61px;height:34px;border:2px solid #6c6c6c;background:#333;color:#999;font:bold 18px/31px 'Liberation Sans',sans-serif;text-align:center">Solo</div>
<div class="a" style="left:1558px;top:615px;width:61px;height:24px;background:#2d2d2d;color:#2fd8d0;font:18px/22px 'Liberation Sans',sans-serif;text-align:center">-oo</div>

<div class="c lr" style="left:1557px"><i class="tr" style="height:224px"></i><i class="tk"></i><i class="l0"></i><i class="l1"></i><i class="mt w"></i><p class="n"><a>10</a><a>5</a><a>0</a><a>5</a><a>10</a><a>20</a><a>30</a><a>50</a></p><i class="f" style="--k:#2cdbe6"></i></div>
<div class="a" style="left:1559px;top:984px;width:60px;height:34px;border:2px solid #6c6c6c;background:#333;color:#aaa;font:bold 18px/30px 'Liberation Sans',sans-serif;text-align:center">Mute</div>
<div class="a tx" style="left:1558px;top:1021px;width:61px;font:16px/19px 'Liberation Sans',sans-serif;color:#35c4bc">LR</div>
<div class="a" style="left:1555px;top:520px;width:2px;height:518px;background:#35c4bc"></div>

<!-- bottom edge -->
<div class="a" style="left:0;top:1038px;width:1621px;height:4px;background:#16252e"></div>
<div class="a" style="left:537px;top:1038px;width:49px;height:4px;background:#4a4f52"></div>
</div></body></html>
